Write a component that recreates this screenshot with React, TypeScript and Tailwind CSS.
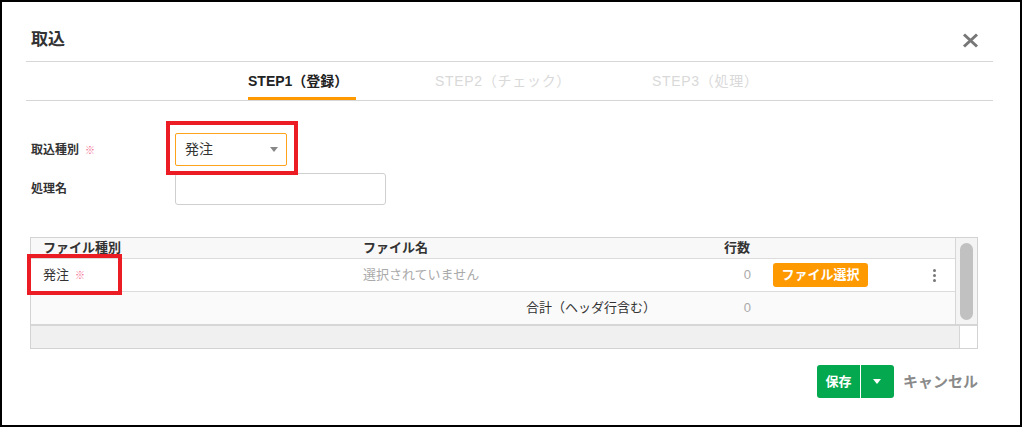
import { Fragment } from "react";

const FONT = "font-['Liberation_Sans','Noto_Sans_CJK_JP',sans-serif]";

const steps = [
  { label: "STEP1（登録）", active: true, w: "w-[108px]" },
  { label: "STEP2（チェック）", active: false, w: "w-[138px]" },
  { label: "STEP3（処理）", active: false, w: "w-[110px]" },
];

function RedMark({ className }: { className: string }) {
  // annotation frame drawn over the screenshot
  return <div className={`pointer-events-none absolute border-[4px] border-[#ec1c24] ${className}`} />;
}

function Req() {
  return <span className="ml-[6px] text-[10px] text-[#f06a8c]">※</span>;
}

export default function App() {
  return (
    <div className={`${FONT} w-[1022px] h-[427px] border-2 border-black bg-white text-[#333]`}>
      <div className="w-[967px] ml-[24px]">
        {/* header */}
        <div className="h-[60px] border-b border-[#d6d6d6] flex items-end justify-between pb-[9px] pl-[5px] pr-[14px]">
          <h1 className="text-[17px] leading-[24px] font-bold text-[#333]">取込</h1>
          <button className="mb-[4px]" title="閉じる">
            <svg width="17" height="15" viewBox="0 0 17 15">
              <path d="M2 1.5 L15 13.5 M15 1.5 L2 13.5" stroke="#777" strokeWidth="3" />
            </svg>
          </button>
        </div>

        {/* steps */}
        <div className="h-[39px] border-b border-[#d6d6d6] flex pl-[222px] gap-[79px]">
          {steps.map((s) => (
            <div
              key={s.label}
              className={`${s.w} h-[38px] pt-[3px] flex items-center whitespace-nowrap text-[14px] leading-[20px] ${
                s.active
                  ? "border-b-[3px] border-[#ff9900] font-bold text-[#222]"
                  : "border-b-[3px] border-transparent text-[#d9d9d9] tracking-[0.7px]"
              }`}
            >
              {s.label}
            </div>
          ))}
        </div>

        {/* form */}
        <div className="mt-[32px] flex items-center">
          <div className="w-[149px] pl-[5px] text-[12px] font-bold text-[#333]">
            取込種別
            <Req />
          </div>
          <div className="relative">
            <div className="w-[112px] h-[33px] border border-[#ffa31a] rounded-[2px] flex items-center justify-between pl-[9px] pr-[8px] text-[14px] text-[#333]">
              <span>発注</span>
              <span className="w-0 h-0 border-x-[4px] border-x-transparent border-t-[5px] border-t-[#888]" />
            </div>
            <RedMark className="-left-[9px] -right-[11px] -top-[12px] -bottom-[9px]" />
          </div>
        </div>
        <div className="mt-[7px] flex items-center">
          <div className="w-[149px] pl-[5px] text-[12px] font-bold text-[#333]">処理名</div>
          <input className="w-[211px] h-[32px] border border-[#cfcfcf] rounded-[3px] outline-none px-2 text-[13px]" />
        </div>

        {/* file table */}
        <div className="mt-[32px] ml-[4px] w-[948px] border border-[#d3d3d3] text-[13px]">
          <div className="flex border-b-2 border-[#d6d6d6]">
            <div className="w-[924px]">
              <div className="h-[21px] flex items-center bg-[#f8f8f8] border-b border-[#dcdcdc] font-bold text-[#333] leading-[20px]">
                <div className="w-[320px] pl-[12px]">ファイル種別</div>
                <div className="w-[340px] pl-[12px]">ファイル名</div>
                <div className="w-[70px] pr-[11px] text-right">行数</div>
                <div className="w-[153px]" />
                <div className="w-[41px]" />
              </div>
              <div className="relative h-[33px] flex items-center bg-white border-b border-[#dcdcdc]">
                <div className="w-[320px] pl-[12px] text-[#333]">
                  発注
                  <Req />
                </div>
                <div className="w-[340px] pl-[12px] text-[#aaa]">選択されていません</div>
                <div className="w-[70px] pr-[10px] text-right text-[#aaa]">0</div>
                <div className="w-[153px] pl-[12px]">
                  <button className="w-[95px] h-[24px] rounded-[3px] bg-[#ff9900] text-white font-bold text-[13px] leading-[24px]">
                    ファイル選択
                  </button>
                </div>
                <div className="w-[41px] flex flex-col items-center gap-[2px]">
                  {[0, 1, 2].map((i) => (
                    <Fragment key={i}>
                      <span className="w-[3px] h-[3px] rounded-full bg-[#777]" />
                    </Fragment>
                  ))}
                </div>
                <RedMark className="-top-[5px] -bottom-[4px] -left-[4px] w-[95px]" />
              </div>
              <div className="h-[32px] flex items-center bg-[#fafafa]">
                <div className="w-[320px]" />
                <div className="w-[340px] pr-[35px] text-right text-[#333]">合計（ヘッダ行含む）</div>
                <div className="w-[70px] pr-[10px] text-right text-[#aaa]">0</div>
                <div className="w-[153px]" />
                <div className="w-[41px]" />
              </div>
            </div>
            <div className="w-[22px] border-l border-[#d6d6d6] bg-[#f4f4f4] pt-[5px] pb-[4px] px-[4px]">
              <div className="h-full rounded-full bg-[#c1c1c1]" />
            </div>
          </div>
          <div className="h-[22px] flex">
            <div className="w-[928px] bg-[#f0f0f0]" />
            <div className="flex-1 border-l border-[#d6d6d6] bg-white" />
          </div>
        </div>

        {/* footer */}
        <div className="mt-[16px] ml-[4px] w-[948px] flex items-center justify-end">
          <div className="flex h-[33px] rounded-[3px] overflow-hidden bg-[#04a84e]">
            <button className="w-[43px] text-white font-bold text-[13px]">保存</button>
            <div className="w-px bg-white" />
            <button className="w-[33px] flex items-center justify-center">
              <span className="w-0 h-0 border-x-[4.5px] border-x-transparent border-t-[5px] border-t-white" />
            </button>
          </div>
          <button className="ml-[9px] text-[15px] font-bold text-[#8a8a8a] leading-[20px]">キャンセル</button>
        </div>
      </div>
    </div>
  );
}
